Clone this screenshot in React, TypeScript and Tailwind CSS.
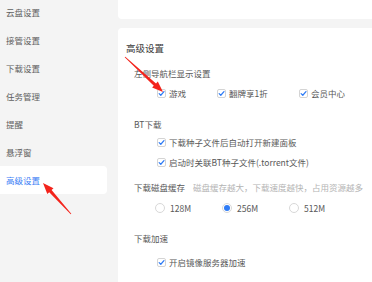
import React from "react";

const FONT = { fontFamily: '"Noto Sans CJK SC", "Noto Sans", sans-serif' };

const MENU = ["云盘设置", "接管设置", "下载设置", "任务管理", "提醒", "悬浮窗", "高级设置"];

function Check({ label, width }: { label: string; width?: number }) {
  return (
    <div className="flex items-center gap-[3px] shrink-0" style={width ? { width } : undefined}>
      <span className="w-[9px] h-[9px] rounded-[2px] border border-[#d4d4d4] bg-white flex items-center justify-center">
        <svg width="7" height="7" viewBox="0 0 8 8">
          <path d="M1.3 4.2 L3.2 6 L6.8 1.8" fill="none" stroke="#2f7cf6" strokeWidth="1.4" strokeLinecap="round" strokeLinejoin="round" />
        </svg>
      </span>
      <span className="text-[8.5px] text-[#585858]">{label}</span>
    </div>
  );
}

function Radio({ label, on }: { label: string; on?: boolean }) {
  return (
    <div className="flex items-center gap-[5px] w-[67px] shrink-0">
      <span className="w-[10px] h-[10px] rounded-full border border-[#d8d8d8] bg-white flex items-center justify-center">
        {on && <span className="w-[6px] h-[6px] rounded-full bg-[#2f7cf6]" />}
      </span>
      <span className="text-[8.5px] text-[#585858]">{label}</span>
    </div>
  );
}

// tapered red arrow from tail to tip
function arrow(tx: number, ty: number, hx: number, hy: number) {
  const dx = hx - tx;
  const dy = hy - ty;
  const len = Math.hypot(dx, dy);
  const ux = dx / len;
  const uy = dy / len;
  const nx = -uy;
  const ny = ux;
  const headLen = 11;
  const bx = hx - ux * headLen;
  const by = hy - uy * headLen;
  const p = (x: number, y: number) => `${x.toFixed(1)},${y.toFixed(1)}`;
  return [
    p(tx + nx * 0.4, ty + ny * 0.4),
    p(bx + nx * 1.6, by + ny * 1.6),
    p(bx + nx * 4.2, by + ny * 4.2),
    p(hx, hy),
    p(bx - nx * 4.2, by - ny * 4.2),
    p(bx - nx * 1.6, by - ny * 1.6),
    p(tx - nx * 0.4, ty - ny * 0.4),
  ].join(" ");
}

export default function App() {
  return (
    <div className="relative w-[372px] h-[282px] overflow-hidden bg-[#f4f4f4] flex" style={FONT}>
      {/* sidebar */}
      <div className="w-[118px] shrink-0 flex flex-col mt-[-2px]">
        {MENU.map((m, i) => {
          const active = i === MENU.length - 1;
          return (
            <div key={m} className="h-[28px] flex items-center">
              <div
                className={`h-full flex items-center pl-[6px] text-[8.5px] ${
                  active ? "w-[107px] bg-white rounded-r-[4px] text-[#3a7ef5]" : "text-[#606060]"
                }`}
              >
                {m}
              </div>
            </div>
          );
        })}
      </div>

      {/* content */}
      <div className="flex-1 flex flex-col">
        <div className="h-[19px] bg-white rounded-bl-[4px]" />
        <div className="mt-[9px] flex-1 bg-white rounded-tl-[4px] pl-[8px] pt-[11px] flex flex-col">
          <div className="h-[18px] flex items-center text-[9.5px] text-[#3a3a3a]">高级设置</div>

          <div className="mt-[7px] ml-[8px] h-[18px] flex items-center text-[8.5px] text-[#585858]">
            左侧导航栏显示设置
          </div>
          <div className="mt-[2px] ml-[31px] h-[18px] flex items-center">
            <Check label="游戏" width={60} />
            <Check label="翻牌享1折" width={82} />
            <Check label="会员中心" />
          </div>

          <div className="mt-[13px] ml-[8px] h-[18px] flex items-center text-[8.5px] text-[#585858]">BT下载</div>
          <div className="ml-[31px] h-[18px] flex items-center">
            <Check label="下载种子文件后自动打开新建面板" />
          </div>
          <div className="mt-[2px] ml-[31px] h-[18px] flex items-center">
            <Check label="启动时关联BT种子文件(.torrent文件)" />
          </div>

          <div className="mt-[7px] ml-[8px] h-[18px] flex items-center gap-[8px] text-[8.5px]">
            <span className="text-[#585858]">下载磁盘缓存</span>
            <span className="text-[#b4b4b4]">磁盘缓存越大，下载速度越快，占用资源越多</span>
          </div>
          <div className="mt-[3px] ml-[29px] h-[18px] flex items-center">
            <Radio label="128M" />
            <Radio label="256M" on />
            <Radio label="512M" />
          </div>

          <div className="mt-[12px] ml-[8px] h-[18px] flex items-center text-[8.5px] text-[#585858]">下载加速</div>
          <div className="mt-[6px] ml-[31px] h-[18px] flex items-center">
            <Check label="开启镜像服务器加速" />
          </div>
        </div>
      </div>

      {/* annotation arrows */}
      <svg className="absolute inset-0 pointer-events-none" width="372" height="282" viewBox="0 0 372 282">
        <polygon points={arrow(125, 57, 163, 92)} fill="#f3241c" />
        <polygon points={arrow(71, 214, 43, 183)} fill="#f3241c" />
      </svg>
    </div>
  );
}
